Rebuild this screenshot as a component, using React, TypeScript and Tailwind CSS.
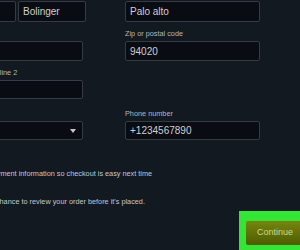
import React from 'react';

interface FieldProps {
  value?: string;
  className?: string;
}

const Field: React.FC<FieldProps> = ({ value = '', className = '' }) => (
  <div
    className={`flex items-center rounded-[2px] border border-[#363a42] bg-[#0a0c14] pl-[4px] text-[10px] text-[#cfcfcf] ${className}`}
  >
    {value}
  </div>
);

const Label: React.FC<{ text?: string; className?: string }> = ({ text = '', className = '' }) => (
  <div className={`h-[9px] text-[7.3px] leading-[9px] text-[#b4b6ba] whitespace-nowrap ${className}`}>{text}</div>
);

export default function App() {
  return (
    <div className="w-[300px] h-[250px] overflow-hidden bg-[#131921] font-['Liberation_Sans',Arial,sans-serif]">
      <div className="ml-[-47px] w-[360px]">
        {/* Form fields */}
        <div className="flex gap-[42px] pl-[18px] pt-[1px]">
          {/* Left column */}
          <div className="flex w-[112px] flex-col">
            <div className="flex w-[115px] gap-[2px]">
              <Field className="h-[21px] w-[45px]" />
              <Field value="Bolinger" className="h-[21px] w-[68px]" />
            </div>
            <Label className="mt-[7px]" />
            <Field className="mt-[3px] h-[20px]" />
            <Label text="Address line 2" className="mt-[7px]" />
            <Field className="mt-[3px] h-[19px]" />
            <Label className="mt-[10px]" />
            <div className="mt-[3px] flex h-[19px] items-center justify-end rounded-[2px] border border-[#363a42] bg-[#0a0c14] pr-[6px]">
              <svg width="6" height="4" viewBox="0 0 6 4">
                <polygon points="0,0 6,0 3,4" fill="#c8c8c8" />
              </svg>
            </div>
          </div>

          {/* Right column */}
          <div className="flex w-[135px] flex-col">
            <Field value="Palo alto" className="h-[21px]" />
            <Label text="Zip or postal code" className="mt-[7px]" />
            <Field value="94020" className="mt-[3px] h-[20px]" />
            <Label text="Phone number" className="mt-[48px]" />
            <Field value="+1234567890" className="mt-[3px] h-[19px]" />
          </div>
        </div>

        {/* Notes */}
        <div className="mt-[27px] flex items-center gap-[5px] text-[7.3px] leading-[9px] text-[#c4c6ca] whitespace-nowrap">
          <div className="h-[12px] w-[12px] rounded-[2px] border border-[#363a42] bg-[#0a0c14]" />
          <span>Save payment information so checkout is easy next time</span>
        </div>
        <div className="mt-[18px] text-[7.3px] leading-[9px] text-[#c4c6ca] whitespace-nowrap">
          You'll have a chance to review your order before it's placed.
        </div>

        {/* Continue */}
        <div className="mt-[5px] flex justify-end pr-[2px]">
          <div className="bg-[#35e536] p-[7px]">
            <button className="h-[24px] w-[58px] rounded-[2px] bg-gradient-to-b from-[#75860f] to-[#4f5c02] text-[9px] text-[#cdd78f]">
              Continue
            </button>
          </div>
        </div>
      </div>
    </div>
  );
}
